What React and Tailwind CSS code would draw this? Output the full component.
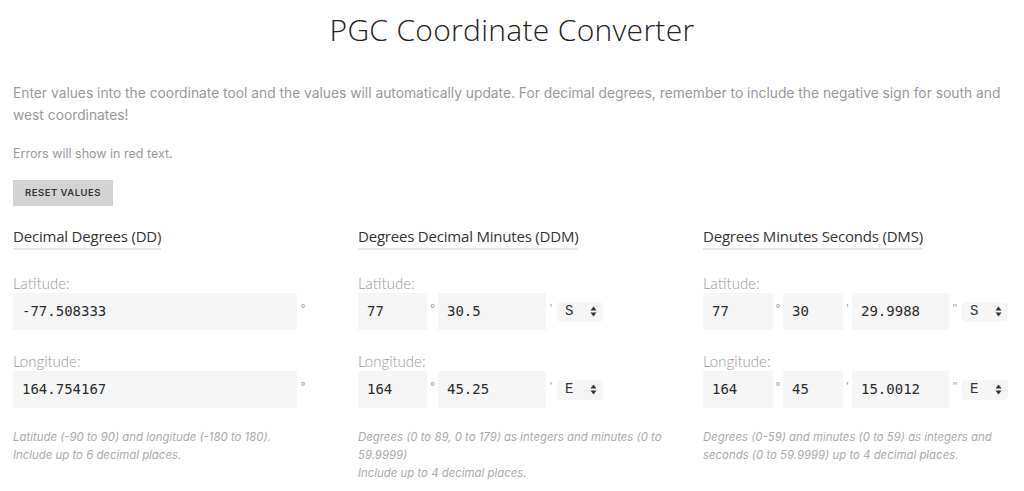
import React from "react";

const mono = { fontFamily: '"DejaVu Sans Mono", monospace' };

function Input({ w, value }) {
  return (
    <div
      className={`h-[37px] bg-[#f6f6f6] flex items-center pl-[9px] text-[14px] text-[#2a2a2a] ${w}`}
      style={mono}
    >
      {value}
    </div>
  );
}

function Sym({ c, w = "w-[11px]" }) {
  return (
    <div className={`${w} h-[37px] flex justify-center pt-[8px] text-[10px] text-[#999] font-['Inter',sans-serif]`}>
      {c}
    </div>
  );
}

function Sel({ v }) {
  return (
    <div className="ml-[1px] w-[46px] h-[20px] bg-[#f6f6f6] rounded-[4px] flex items-center justify-between pl-[8px] pr-[6px] text-[14px] text-[#333] font-['Liberation_Mono',monospace]">
      <span>{v}</span>
      <svg width="7" height="11" viewBox="0 0 7 11">
        <path d="M3.5 0.5 L6.5 4.5 L0.5 4.5 Z" fill="#333" />
        <path d="M3.5 10.5 L6.5 6.5 L0.5 6.5 Z" fill="#333" />
      </svg>
    </div>
  );
}

function Label({ children }) {
  return (
    <div className="text-[15px] text-[#999] font-light font-['Lato',sans-serif] h-[20px] leading-[20px]">
      {children}
    </div>
  );
}

function Heading({ children }) {
  return (
    <div className="inline-block">
      <div className="text-[15px] text-[#333] font-['Open_Sans',sans-serif] leading-[20px] tracking-[-0.2px]">
        {children}
      </div>
      <div className="mt-[2px] h-[2px] bg-[#e6e6e6]" />
    </div>
  );
}

function Help({ children }) {
  return (
    <div className="mt-[20px] text-[11.4px] leading-[18px] italic text-[#aaa] font-['Inter',sans-serif]">
      {children}
    </div>
  );
}

export default function App() {
  return (
    <div className="w-[1024px] h-[491px] bg-white overflow-hidden px-[13px]">
      <h1 className="pt-[10px] text-center text-[30px] leading-[40px] text-[#222] font-light font-['Open_Sans',sans-serif] tracking-[0.3px]">
        PGC Coordinate Converter
      </h1>
      <p className="mt-[32px] text-[13.8px] leading-[22px] text-[#999] font-['Inter',sans-serif] pr-[8px]">
        Enter values into the coordinate tool and the values will automatically update. For decimal degrees, remember to include the negative sign for south and west coordinates!
      </p>
      <p className="mt-[20px] text-[12.5px] leading-[16px] text-[#999] font-['Inter',sans-serif]">
        Errors will show in red text.
      </p>
      <div className="mt-[18px] w-[100px] h-[26px] bg-[#d3d3d3] flex items-center justify-center text-[9.5px] font-semibold tracking-[0.5px] text-[#333] font-['Inter',sans-serif]">
        RESET VALUES
      </div>
      <div className="mt-[18px] grid grid-cols-[345px_345px_1fr]">
        {/* DD */}
        <div>
          <Heading>Decimal Degrees (DD)</Heading>
          <div className="mt-[23px]">
            <Label>Latitude:</Label>
            <div className="flex">
              <Input w="w-[284px]" value="-77.508333" />
              <Sym c="°" w="w-[12px]" />
            </div>
          </div>
          <div className="mt-[21px]">
            <Label>Longitude:</Label>
            <div className="flex">
              <Input w="w-[284px]" value="164.754167" />
              <Sym c="°" w="w-[12px]" />
            </div>
          </div>
          <Help>
            Latitude (-90 to 90) and longitude (-180 to 180).
            <br />
            Include up to 6 decimal places.
          </Help>
        </div>
        {/* DDM */}
        <div>
          <Heading>Degrees Decimal Minutes (DDM)</Heading>
          <div className="mt-[23px]">
            <Label>Latitude:</Label>
            <div className="flex items-center">
              <Input w="w-[69px]" value="77" />
              <Sym c="°" />
              <Input w="w-[108px]" value="30.5" />
              <Sym c="'" w="w-[10px]" />
              <Sel v="S" />
            </div>
          </div>
          <div className="mt-[21px]">
            <Label>Longitude:</Label>
            <div className="flex items-center">
              <Input w="w-[69px]" value="164" />
              <Sym c="°" />
              <Input w="w-[108px]" value="45.25" />
              <Sym c="'" w="w-[10px]" />
              <Sel v="E" />
            </div>
          </div>
          <Help>
            Degrees (0 to 89, 0 to 179) as integers and minutes (0 to 59.9999)
            <br />
            Include up to 4 decimal places.
          </Help>
        </div>
        {/* DMS */}
        <div>
          <Heading>Degrees Minutes Seconds (DMS)</Heading>
          <div className="mt-[23px]">
            <Label>Latitude:</Label>
            <div className="flex items-center">
              <Input w="w-[70px]" value="77" />
              <Sym c="°" w="w-[10px]" />
              <Input w="w-[60px]" value="30" />
              <Sym c="'" w="w-[9px]" />
              <Input w="w-[97px]" value="29.9988" />
              <Sym c={"\u2033"} w="w-[12px]" />
              <Sel v="S" />
            </div>
          </div>
          <div className="mt-[21px]">
            <Label>Longitude:</Label>
            <div className="flex items-center">
              <Input w="w-[70px]" value="164" />
              <Sym c="°" w="w-[10px]" />
              <Input w="w-[60px]" value="45" />
              <Sym c="'" w="w-[9px]" />
              <Input w="w-[97px]" value="15.0012" />
              <Sym c={"\u2033"} w="w-[12px]" />
              <Sel v="E" />
            </div>
          </div>
          <Help>
            Degrees (0-59) and minutes (0 to 59) as integers and seconds (0 to 59.9999) up to 4 decimal places.
          </Help>
        </div>
      </div>
    </div>
  );
}
